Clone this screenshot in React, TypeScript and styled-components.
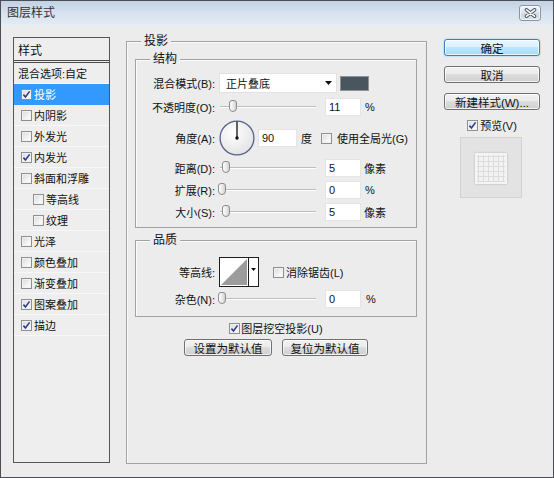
import React from "react";
import styled, { createGlobalStyle } from "styled-components";

const FONT = `"Liberation Sans", "Noto Sans CJK SC", sans-serif`;

const Global = createGlobalStyle`
  html, body { margin: 0; padding: 0; width: 554px; height: 478px; overflow: hidden; background: #ececec; }
  * { box-sizing: border-box; }
`;

const Window = styled.div`
  width: 554px;
  height: 478px;
  border: 1px solid #4b4f55;
  background: #ececec;
  display: flex;
  flex-direction: column;
  font-family: ${FONT};
  font-size: 11px;
  color: #111;
`;

const TitleBar = styled.div`
  height: 24px;
  flex: none;
  display: flex;
  align-items: center;
  justify-content: space-between;
  padding: 0 12px 0 6px;
  background: linear-gradient(#c2d1e4, #d7e3f0 55%, #e1eaf4);
  border-bottom: 1px solid #e6ecf3;
`;

const TitleText = styled.span`
  font-size: 12px;
  color: #333;
  line-height: 14px;
`;

const CloseButton = styled.div`
  width: 22px;
  height: 16px;
  border: 1px solid #8995a5;
  border-radius: 3px;
  background: linear-gradient(#f1f4f8, #dfe5ec 50%, #d2d9e2 50%, #dce2ea);
  box-shadow: inset 0 0 0 1px rgba(255, 255, 255, 0.6);
  display: flex;
  align-items: center;
  justify-content: center;
`;

const Body = styled.div`
  flex: 1;
  display: flex;
  align-items: stretch;
  padding: 9px 12px 13px 12px;
`;

/* ---------- left list ---------- */

const StylePanel = styled.div`
  width: 97px;
  margin: 3px 0 1px 0;
  border: 1px solid #555;
  background: #eeeeee;
  display: flex;
  flex-direction: column;
`;

const PanelHeader = styled.div`
  height: 25px;
  flex: none;
  padding-left: 4px;
  display: flex;
  align-items: center;
  border-bottom: 3px double #4a4a4a;
  font-size: 12px;
`;

const ListRow = styled.div<{ $selected?: boolean; $indent?: number }>`
  height: 21px;
  flex: none;
  display: flex;
  align-items: center;
  gap: 2px;
  padding-left: ${(p) => p.$indent ?? 7}px;
  background: ${(p) => (p.$selected ? "#3399ff" : "transparent")};
  color: ${(p) => (p.$selected ? "#fff" : "#111")};
  border-bottom: 1px solid ${(p) => (p.$selected ? "#3399ff" : "#f7f7f7")};
  white-space: nowrap;
`;

/* ---------- checkbox ---------- */

const CheckBoxBox = styled.span`
  width: 11px;
  height: 11px;
  flex: none;
  border: 1px solid #8e8f8f;
  background: linear-gradient(135deg, #d8d8d8, #f7f7f7 70%, #ffffff);
  box-shadow: inset 0 0 0 1px #f2f2f2;
  display: inline-flex;
  align-items: center;
  justify-content: center;
`;

const Check = ({ checked }: { checked?: boolean }) => (
  <CheckBoxBox>
    {checked && (
      <svg width="9" height="9" viewBox="0 0 9 9">
        <path d="M1.4 4.6 L3.5 7 L7.6 1.4" fill="none" stroke="#2c3d91" strokeWidth="1.6" />
      </svg>
    )}
  </CheckBoxBox>
);

const CheckLabel = styled.label<{ $gap?: number }>`
  display: inline-flex;
  align-items: center;
  gap: ${(p) => p.$gap ?? 3}px;
  white-space: nowrap;
`;

/* ---------- middle ---------- */

const Group = styled.fieldset<{ $pad?: string; $width?: number }>`
  margin: 0;
  min-width: 0;
  ${(p) => (p.$width ? `width: ${p.$width}px;` : "")}
  padding: ${(p) => p.$pad ?? "0"};
  border: 1px solid #a2a2a2;
  box-shadow: inset 1px 1px 0 #fbfbfb;
`;

const Legend = styled.legend<{ $offset: number }>`
  margin-left: ${(p) => p.$offset}px;
  padding: 0 3px;
  line-height: 14px;
  font-size: 12px;
  background: #ececec;
  position: relative;
`;

const MainGroup = styled(Group)`
  margin-left: 16px;
  display: flex;
  flex-direction: column;
`;

const Row = styled.div<{ $h: number }>`
  height: ${(p) => p.$h}px;
  display: flex;
  align-items: center;
`;

const Label = styled.span`
  width: 79px;
  flex: none;
  text-align: right;
  margin-right: 4px;
  white-space: nowrap;
`;

const Select = styled.div`
  width: 118px;
  height: 20px;
  background: #fff;
  border: 1px solid #e2e2e2;
  display: flex;
  align-items: center;
  justify-content: space-between;
  padding: 0 4px 0 6px;
  font-size: 11px;
`;

const Swatch = styled.div<{ $color: string }>`
  width: 29px;
  height: 15px;
  margin-left: 3px;
  background: ${(p) => p.$color};
  border: 1px solid #8d9296;
`;

const Track = styled.div`
  position: relative;
  width: 96px;
  height: 2px;
  margin-left: 1px;
  border-top: 1px solid #bdbdbd;
  background: #fff;
`;

const Thumb = styled.span<{ $at: number }>`
  position: absolute;
  left: ${(p) => p.$at - 4}px;
  top: -7px;
  width: 8px;
  height: 12px;
  border: 1px solid #8c8c8c;
  border-radius: 3px 3px 4px 4px;
  background: linear-gradient(90deg, #ffffff, #e6e6e6 60%, #d2d2d2);
`;

const NumInput = styled.div<{ $w?: number; $ml?: number }>`
  width: ${(p) => p.$w ?? 36}px;
  height: 18px;
  margin-left: ${(p) => p.$ml ?? 9}px;
  background: #fff;
  border: 1px solid #e4e4e4;
  padding-left: 3px;
  display: flex;
  align-items: center;
  font-size: 11px;
`;

const Unit = styled.span<{ $ml?: number }>`
  margin-left: ${(p) => p.$ml ?? 3}px;
  white-space: nowrap;
`;

const Slider = ({ at }: { at: number }) => (
  <Track>
    <Thumb $at={at} />
  </Track>
);

const ContourBox = styled.div`
  width: 40px;
  height: 30px;
  border: 1px solid #1e1e1e;
  background: #fff;
  display: flex;
`;

const ContourArrow = styled.div`
  width: 10px;
  border-left: 1px solid #1e1e1e;
  display: flex;
  justify-content: center;
  padding-top: 10px;
`;

const CenterRow = styled.div<{ $h: number; $mt: number; $gap?: number }>`
  height: ${(p) => p.$h}px;
  margin-top: ${(p) => p.$mt}px;
  display: flex;
  justify-content: center;
  align-items: center;
  gap: ${(p) => p.$gap ?? 0}px;
`;

/* ---------- right ---------- */

const RightColumn = styled.div`
  width: 96px;
  margin: 5px 0 0 17px;
  display: flex;
  flex-direction: column;
  align-items: stretch;
`;

const Button = styled.div<{ $primary?: boolean; $w?: number; $mt?: number }>`
  height: 17px;
  ${(p) => (p.$w ? `width: ${p.$w}px;` : "")}
  margin-top: ${(p) => p.$mt ?? 0}px;
  border: 1px solid ${(p) => (p.$primary ? "#3c7fb1" : "#707070")};
  border-radius: 3px;
  background: ${(p) =>
    p.$primary
      ? "linear-gradient(#eaf6fd, #d9f0fc 50%, #bee6fd 50%, #a7d9f5)"
      : "linear-gradient(#f2f2f2, #ebebeb 50%, #dddddd 50%, #cfcfcf)"};
  box-shadow: ${(p) =>
    p.$primary
      ? "inset 0 0 0 1px rgba(255,255,255,0.75), 0 0 2px #6fc3ef"
      : "inset 0 0 0 1px rgba(255,255,255,0.7)"};
  display: flex;
  align-items: center;
  justify-content: center;
  font-size: 11.5px;
  white-space: nowrap;
`;

const PreviewBox = styled.div`
  width: 62px;
  height: 61px;
  margin: 4px 0 0 16px;
  border: 1px solid #d2d2d2;
  background: #e3e3e3;
  display: flex;
  align-items: center;
  justify-content: center;
  padding-top: 2px;
`;

const PreviewTile = styled.div`
  width: 32px;
  height: 31px;
  border: 2px solid #f4f4f4;
  background-color: #f2f2f2;
  background-image: linear-gradient(#dcdcdc 1px, transparent 1px),
    linear-gradient(90deg, #dcdcdc 1px, transparent 1px);
  background-size: 5px 5px;
  background-position: 1px 1px;
  box-shadow: 0 0 2px rgba(0, 0, 0, 0.22);
`;

const items: { label: string; checked?: boolean; selected?: boolean; indent?: boolean }[] = [
  { label: "投影", checked: true, selected: true },
  { label: "内阴影" },
  { label: "外发光" },
  { label: "内发光", checked: true },
  { label: "斜面和浮雕" },
  { label: "等高线", indent: true },
  { label: "纹理", indent: true },
  { label: "光泽" },
  { label: "颜色叠加" },
  { label: "渐变叠加" },
  { label: "图案叠加", checked: true },
  { label: "描边", checked: true },
];

const DownArrow = () => (
  <svg width="7" height="4" viewBox="0 0 7 4">
    <path d="M0 0 H7 L3.5 4 Z" fill="#111" />
  </svg>
);

const Dial = () => (
  <svg width="36" height="36" viewBox="0 0 36 36" style={{ flex: "none" }}>
    <defs>
      <radialGradient id="dialFill" cx="40%" cy="35%" r="70%">
        <stop offset="0" stopColor="#ffffff" />
        <stop offset="1" stopColor="#e2e2e2" />
      </radialGradient>
    </defs>
    <circle cx="18" cy="18" r="16.9" fill="url(#dialFill)" stroke="#56618a" strokeWidth="1.3" />
    <line x1="18" y1="18" x2="18" y2="1.5" stroke="#111" strokeWidth="1.3" />
    <circle cx="18" cy="18" r="1.7" fill="#111" />
  </svg>
);

export default function App() {
  return (
    <>
      <Global />
      <Window>
        <TitleBar>
          <TitleText>图层样式</TitleText>
          <CloseButton>
            <svg width="13" height="10" viewBox="0 0 13 10">
              <path d="M2.5 1.8 L10.5 8.2 M10.5 1.8 L2.5 8.2" stroke="#4a5360" strokeWidth="3.6" strokeLinecap="round" />
              <path d="M2.5 1.8 L10.5 8.2 M10.5 1.8 L2.5 8.2" stroke="#fff" strokeWidth="1.7" strokeLinecap="round" />
            </svg>
          </CloseButton>
        </TitleBar>
        <Body>
          <StylePanel>
            <PanelHeader>样式</PanelHeader>
            <ListRow $indent={4}>混合选项:自定</ListRow>
            {items.map((it) => (
              <ListRow key={it.label} $selected={it.selected} $indent={it.indent ? 19 : 7}>
                <Check checked={it.checked} />
                <span>{it.label}</span>
              </ListRow>
            ))}
          </StylePanel>

          <MainGroup $width={301} $pad="4px 9px 0 8px">
            <Legend $offset={6}>投影</Legend>
            <Group $pad="5px 0 4px 0">
              <Legend $offset={14}>结构</Legend>
              <Row $h={24}>
                <Label>混合模式(B):</Label>
                <Select>
                  <span>正片叠底</span>
                  <DownArrow />
                </Select>
                <Swatch $color="#4a565d" />
              </Row>
              <Row $h={24}>
                <Label>不透明度(O):</Label>
                <Slider at={13} />
                <NumInput>11</NumInput>
                <Unit $ml={4}>%</Unit>
              </Row>
              <Row $h={38}>
                <Label>角度(A):</Label>
                <Dial />
                <NumInput $w={39} $ml={3}>90</NumInput>
                <Unit $ml={4}>度</Unit>
                <CheckLabel style={{ marginLeft: 9 }} $gap={5}>
                  <Check />
                  使用全局光(G)
                </CheckLabel>
              </Row>
              <Row $h={22}>
                <Label>距离(D):</Label>
                <Slider at={6} />
                <NumInput>5</NumInput>
                <Unit>像素</Unit>
              </Row>
              <Row $h={22}>
                <Label>扩展(R):</Label>
                <Slider at={2} />
                <NumInput>0</NumInput>
                <Unit $ml={4}>%</Unit>
              </Row>
              <Row $h={22}>
                <Label>大小(S):</Label>
                <Slider at={6} />
                <NumInput>5</NumInput>
                <Unit>像素</Unit>
              </Row>
            </Group>

            <Group $pad="9px 0 6px 0" style={{ marginTop: 5 }}>
              <Legend $offset={14}>品质</Legend>
              <Row $h={32}>
                <Label>等高线:</Label>
                <ContourBox>
                  <svg width="28" height="28" viewBox="0 0 28 28">
                    <polygon points="1,27 27,1 27,27" fill="#9c9c9c" />
                  </svg>
                  <ContourArrow>
                    <svg width="5" height="3" viewBox="0 0 5 3">
                      <path d="M0 0 H5 L2.5 3 Z" fill="#111" />
                    </svg>
                  </ContourArrow>
                </ContourBox>
                <CheckLabel style={{ marginLeft: 14 }} $gap={2}>
                  <Check />
                  消除锯齿(L)
                </CheckLabel>
              </Row>
              <Row $h={22}>
                <Label>杂色(N):</Label>
                <Slider at={2} />
                <NumInput>0</NumInput>
                <Unit $ml={5}>%</Unit>
              </Row>
            </Group>

            <CenterRow $h={16} $mt={3}>
              <CheckLabel $gap={1}>
                <Check checked />
                图层挖空投影(U)
              </CheckLabel>
            </CenterRow>
            <CenterRow $h={17} $mt={3} $gap={10}>
              <Button $w={88}>设置为默认值</Button>
              <Button $w={86}>复位为默认值</Button>
            </CenterRow>
          </MainGroup>

          <RightColumn>
            <Button $primary>确定</Button>
            <Button $mt={10}>取消</Button>
            <Button $mt={10}>新建样式(W)...</Button>
            <CenterRow $h={16} $mt={7}>
              <CheckLabel $gap={2}>
                <Check checked />
                预览(V)
              </CheckLabel>
            </CenterRow>
            <PreviewBox>
              <PreviewTile />
            </PreviewBox>
          </RightColumn>
        </Body>
      </Window>
    </>
  );
}
